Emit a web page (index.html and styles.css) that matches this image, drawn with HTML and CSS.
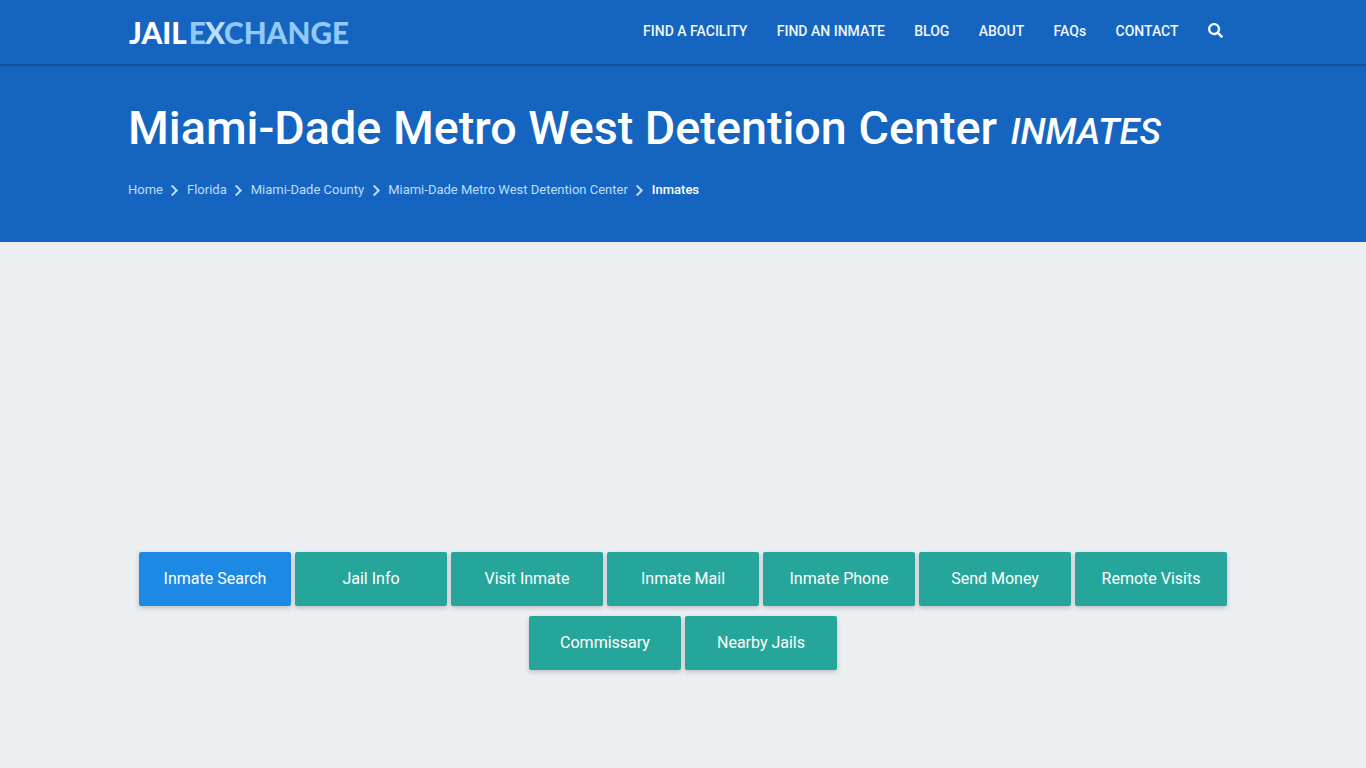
FILE: index.html
```html
<!DOCTYPE html>
<html lang="en">
<head>
    <meta charset="UTF-8">
    <meta name="viewport" content="width=device-width, initial-scale=1.0">
    <title>Miami-Dade Metro West Detention Center Inmates - Jail Exchange</title>
    <link rel="stylesheet" href="styles.css">
</head>
<body>
    <nav class="navbar">
        <div class="container navbar-inner">
            <a class="logo" href="#"><span class="logo-jail">JAIL</span><span class="logo-exchange">E<span class="logo-x">X</span>CHANGE</span></a>
            <ul class="nav-links">
                <li><a href="#">FIND A FACILITY</a></li>
                <li><a href="#">FIND AN INMATE</a></li>
                <li><a href="#">BLOG</a></li>
                <li><a href="#">ABOUT</a></li>
                <li><a href="#">FAQs</a></li>
                <li><a href="#">CONTACT</a></li>
                <li>
                    <a href="#" class="search-link" aria-label="Search">
                        <svg width="15" height="15" viewBox="0 0 512 512">
                            <path fill="currentColor" d="M505 442.7L405.3 343c-4.5-4.5-10.6-7-17-7H372c27.6-35.3 44-79.7 44-128C416 93.1 322.9 0 208 0S0 93.1 0 208s93.1 208 208 208c48.3 0 92.7-16.4 128-44v16.3c0 6.4 2.5 12.5 7 17l99.7 99.7c9.4 9.4 24.6 9.4 33.9 0l28.3-28.3c9.4-9.4 9.4-24.6.1-34zM208 336c-70.7 0-128-57.2-128-128 0-70.7 57.2-128 128-128 70.7 0 128 57.2 128 128 0 70.7-57.2 128-128 128z"/>
                        </svg>
                    </a>
                </li>
            </ul>
        </div>
    </nav>

    <header class="hero">
        <div class="container">
            <h1>Miami-Dade Metro West Detention Center <small>INMATES</small></h1>
            <ol class="breadcrumb">
                <li><a href="#">Home</a></li>
                <li class="sep"><svg width="9" height="13" viewBox="0 0 320 512"><use href="#chevron"/></svg></li>
                <li><a href="#">Florida</a></li>
                <li class="sep"><svg width="9" height="13" viewBox="0 0 320 512"><use href="#chevron"/></svg></li>
                <li><a href="#">Miami-Dade County</a></li>
                <li class="sep"><svg width="9" height="13" viewBox="0 0 320 512"><use href="#chevron"/></svg></li>
                <li><a href="#">Miami-Dade Metro West Detention Center</a></li>
                <li class="sep"><svg width="9" height="13" viewBox="0 0 320 512"><use href="#chevron"/></svg></li>
                <li class="current">Inmates</li>
            </ol>
        </div>
    </header>

    <main class="content">
        <div class="tabs">
            <a class="tab active" href="#">Inmate Search</a>
            <a class="tab" href="#">Jail Info</a>
            <a class="tab" href="#">Visit Inmate</a>
            <a class="tab" href="#">Inmate Mail</a>
            <a class="tab" href="#">Inmate Phone</a>
            <a class="tab" href="#">Send Money</a>
            <a class="tab" href="#">Remote Visits</a>
            <a class="tab" href="#">Commissary</a>
            <a class="tab" href="#">Nearby Jails</a>
        </div>
    </main>

    <svg class="defs" width="0" height="0">
        <symbol id="chevron" viewBox="0 0 320 512">
            <path fill="currentColor" d="M285.476 272.971L91.132 467.314c-9.373 9.373-24.569 9.373-33.941 0l-22.667-22.667c-9.357-9.357-9.375-24.522-.04-33.901L188.505 256 34.484 101.255c-9.335-9.379-9.317-24.544.04-33.901l22.667-22.667c9.373-9.373 24.569-9.373 33.941 0L285.475 239.03c9.373 9.372 9.373 24.568.001 33.941z"/>
        </symbol>
    </svg>
</body>
</html>
```

FILE: styles.css
```css
* {
    box-sizing: border-box;
}
html, body {
    height: 100%;
}
body {
    margin: 0;
    font-family: Roboto, "Liberation Sans", sans-serif;
    background: #eceff1;
    overflow: hidden;
}
a {
    color: inherit;
    text-decoration: none;
}
.defs {
    display: block;
}
.container {
    width: 1140px;
    margin: 0 auto;
    padding: 0 15px;
}
.navbar {
    position: relative;
    height: 65px;
    background: #1565c0;
    border-bottom: 1px solid #0f4f9c;
    box-shadow: 0 1px 3px rgba(0,0,0,0.2);
}
.navbar-inner {
    display: flex;
    justify-content: space-between;
    align-items: center;
    height: 64px;
    padding-right: 30px;
}
.logo {
    margin: 2px 0 0 1px;
    font-family: Lato, sans-serif;
    font-size: 29.7px;
    font-weight: 900;
    line-height: 1;
}
.logo-jail {
    color: #fff;
    margin-right: 2px;
}
.logo-exchange {
    color: #90caf9;
}
.logo-x {
    color: #bbdefb;
    margin: 0 -1px;
}
.nav-links {
    display: flex;
    align-items: center;
    gap: 29.4px;
    margin: -3px 0 0;
    padding: 0;
    list-style: none;
    color: #eef6fe;
    font-size: 14px;
    font-weight: 500;
}
.search-link {
    display: flex;
}
.hero {
    height: 177px;
    background: #1565c0;
    color: #fff;
}
.hero h1 {
    margin: 0;
    padding-top: 35px;
    font-size: 46.7px;
    font-weight: 500;
    line-height: 56px;
}
.hero small {
    margin-left: 2px;
    font-size: 36.4px;
    font-style: italic;
    font-weight: 500;
}
.breadcrumb {
    display: flex;
    align-items: center;
    margin: 20px 0 0;
    padding: 0;
    list-style: none;
    color: #bbdefb;
    font-size: 13px;
    line-height: 20px;
}
.sep {
    display: flex;
    margin: 0 7.5px;
}
.current {
    color: #fff;
    font-weight: 500;
}
.content {
    padding-top: 310px;
}
.tabs {
    display: flex;
    flex-wrap: wrap;
    justify-content: center;
    row-gap: 10px;
    column-gap: 4px;
    width: 1100px;
    margin: 0 auto;
}
.tab {
    display: flex;
    align-items: center;
    justify-content: center;
    width: 152px;
    height: 54px;
    padding-bottom: 2px;
    background: #26a69a;
    border-radius: 2px;
    color: #fff;
    font-size: 16px;
    box-shadow: 0 2px 5px rgba(0,0,0,0.2);
}
.tab.active {
    background: #1e88e5;
}
```
